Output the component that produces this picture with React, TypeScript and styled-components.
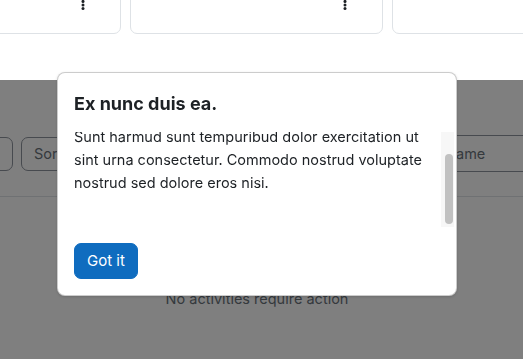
import { useEffect, useRef } from 'react'
import styled, { createGlobalStyle } from 'styled-components'

const GlobalStyle = createGlobalStyle`
  html, body {
    margin: 0;
    padding: 0;
    overflow: hidden;
    background: #fff;
    font-family: Inter, "Noto Sans", sans-serif;
    color: #1d2125;
  }
  * { box-sizing: border-box; }
`

const Page = styled.div`
  width: 796px;
  margin-left: -141px;
  padding: 0 9px;
  height: 359px;
`

const CardRow = styled.div`
  display: flex;
  gap: 9px;
  margin-top: -40px;
`

const Card = styled.div`
  width: 253px;
  height: 74px;
  border: 1px solid #dee2e6;
  border-radius: 7px;
  display: flex;
  justify-content: flex-end;
  padding: 39px 35px 0 0;
`

const Kebab = () => (
  <svg width="4" height="11" viewBox="0 0 4 11">
    <circle cx="2" cy="1.4" r="1.5" fill="#1d2125" />
    <circle cx="2" cy="5" r="1.5" fill="#1d2125" />
    <circle cx="2" cy="8.6" r="1.5" fill="#1d2125" />
  </svg>
)

const FilterRow = styled.div`
  display: flex;
  align-items: center;
  gap: 8px;
  margin-top: 101px;
`

const Select = styled.div<{ w: number }>`
  width: ${p => p.w}px;
  height: 34px;
  border: 1px solid #8f959e;
  border-radius: 7px;
  padding: 0 12px;
  display: flex;
  align-items: center;
  font-size: 14.5px;
  color: #6a737b;
  flex-shrink: 0;
`

const Search = styled.div`
  flex: 1;
  margin-left: 1px;
  height: 37px;
  border-top: 1px solid #8f959e;
  border-bottom: 1px solid #8f959e;
  border-left: 1px solid #8f959e;
  padding: 0 12px;
  display: flex;
  align-items: center;
  font-size: 14.5px;
  color: #6a737b;
`

const Divider = styled.div`
  height: 1px;
  background: #dee2e6;
  margin-top: 24px;
`

const Empty = styled.div`
  text-align: center;
  font-size: 14.5px;
  line-height: 22px;
  color: #6a737b;
  margin-top: 91px;
`

const Rule = styled.div<{ gap: number }>`
  height: 1px;
  background: #dee2e6;
  margin-top: ${p => p.gap}px;
`

const Backdrop = styled.div`
  position: fixed;
  left: 0;
  right: 0;
  top: 80px;
  bottom: 0;
  background: rgba(0, 0, 0, 0.5);
`

const Popover = styled.div`
  position: fixed;
  left: 57px;
  top: 72px;
  width: 400px;
  background: #fff;
  border: 1px solid rgba(0, 0, 0, 0.2);
  border-radius: 8px;
  box-shadow: 0 1px 3px rgba(0, 0, 0, 0.15);
`

const Title = styled.h5`
  margin: 0;
  padding: 20px 16px 0;
  font-size: 18px;
  line-height: 1.2;
  font-weight: 700;
  color: #1d2125;
`

const Body = styled.div`
  display: flex;
  margin: 17px 2px 0 16px;
  height: 95px;
`

const Clip = styled.div`
  flex: 1;
  overflow: hidden;
  font-size: 14.5px;
  line-height: 23px;
  color: #1d2125;
`

const Track = styled.div`
  width: 13px;
  background: #f7f7f7;
  padding: 22px 1px 0 4px;
`

const Thumb = styled.div`
  height: 70px;
  background: #c1c1c1;
  border-radius: 4px;
`

const Text = styled.p`
  margin: 0;
  padding: 24px 0 37px;
`

const Footer = styled.div`
  padding: 16px;
`

const Button = styled.button`
  background: #0f6cbf;
  color: #fff;
  border: 1px solid #0f6cbf;
  border-radius: 7px;
  font-family: Inter, "Noto Sans", sans-serif;
  font-size: 15px;
  line-height: 1.5;
  padding: 6px 12px;
`

const App = () => {
  const clipRef = useRef<HTMLDivElement>(null)
  useEffect(() => {
    if (clipRef.current) clipRef.current.scrollTop = 31
  }, [])

  return (
    <>
      <GlobalStyle />
      <Page>
        <CardRow>
          <Card><Kebab /></Card>
          <Card><Kebab /></Card>
          <Card />
        </CardRow>
        <FilterRow>
          <Select w={145} />
          <Select w={225}>Sort by dates</Select>
          <Search>Search by activity type or name</Search>
        </FilterRow>
        <Divider />
        <Empty>No activities require action</Empty>
        <Rule gap={37} />
        <Rule gap={16} />
      </Page>
      <Backdrop />
      <Popover>
        <Title>Ex nunc duis ea.</Title>
        <Body>
          <Clip ref={clipRef}>
            <Text>
              Sunt harmud sunt tempuribud dolor exercitation ut sint urna consectetur. Commodo
              nostrud voluptate nostrud sed dolore eros nisi.
            </Text>
          </Clip>
          <Track>
            <Thumb />
          </Track>
        </Body>
        <Footer>
          <Button>Got it</Button>
        </Footer>
      </Popover>
    </>
  )
}

export default App
